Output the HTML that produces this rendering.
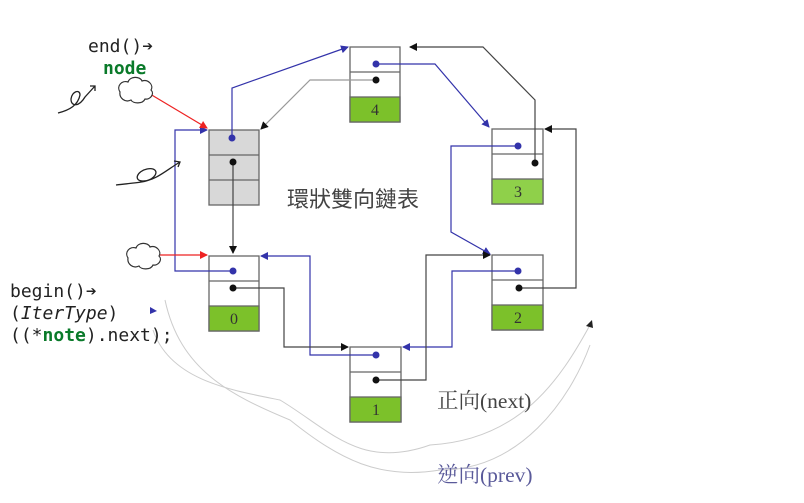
<!DOCTYPE html><html><head><meta charset="utf-8"><style>body{margin:0;background:#fff}svg{display:block}</style></head><body>
<svg width="804" height="503" viewBox="0 0 804 503" xmlns="http://www.w3.org/2000/svg">
<defs>
<marker id="ab" markerWidth="8" markerHeight="8" refX="7" refY="4" orient="auto" markerUnits="userSpaceOnUse"><path d="M0,0L8,4L0,8z" fill="#33a"/></marker>
<marker id="ak" markerWidth="8" markerHeight="8" refX="7" refY="4" orient="auto" markerUnits="userSpaceOnUse"><path d="M0,0L8,4L0,8z" fill="#111"/></marker>
<marker id="ar" markerWidth="8" markerHeight="8" refX="7" refY="4" orient="auto" markerUnits="userSpaceOnUse"><path d="M0,0L8,4L0,8z" fill="#e22"/></marker>
</defs>
<g fill="none" stroke="#ccc" stroke-width="1">
<path d="M153,330 C170,380 230,390 280,400 C330,430 360,470 430,445 C520,440 560,380 590,325"/>
<path d="M165,300 C180,370 230,395 290,420 C340,460 380,480 440,470 C520,470 570,400 590,345"/>
</g>
<g stroke="#666" stroke-width="1.3">
<rect x="209" y="130" width="50" height="75" fill="#d8d8d8"/>
<line x1="209" y1="155" x2="259" y2="155"/><line x1="209" y1="180" x2="259" y2="180"/>
<g fill="#fff"><rect x="350" y="47" width="50" height="75"/><rect x="492" y="129" width="51" height="75"/><rect x="492" y="255" width="51" height="75"/><rect x="350" y="347" width="51" height="75"/><rect x="209" y="256" width="50" height="75"/></g>
<g fill="#7cc12a"><rect x="350" y="97" width="50" height="25"/><rect x="492" y="179" width="51" height="25" fill="#8fd04a"/><rect x="492" y="305" width="51" height="25"/><rect x="350" y="397" width="51" height="25"/><rect x="209" y="306" width="50" height="25"/></g>
<path d="M350,72h50M492,154h51M492,280h51M350,372h51M209,281h50"/>
</g>
<g fill="none" stroke="#33a" stroke-width="1.2">
<path d="M232,138V88L348,47" marker-end="url(#ab)"/>
<path d="M376,64H435L489,127" marker-end="url(#ab)"/>
<path d="M518,146H451V232L490,254" marker-end="url(#ab)"/>
<path d="M518,271H452V347H403" marker-end="url(#ab)"/>
<path d="M376,355H310V256H261" marker-end="url(#ab)"/>
<path d="M233,271H175V130H207" marker-end="url(#ab)"/>
</g>
<g fill="none" stroke="#444" stroke-width="1.2">
<path d="M233,288H284V347H348" marker-end="url(#ak)"/>
<path d="M376,380H426V255H490" marker-end="url(#ak)"/>
<path d="M519,288H576V129H545" marker-end="url(#ak)"/>
<path d="M535,163V100L483,47H410" marker-end="url(#ak)"/>
<path d="M376,80H310L261,129" marker-end="url(#ak)" stroke="#999"/>
<path d="M233,162V253" marker-end="url(#ak)"/>
</g>
<g fill="none" stroke="#e22" stroke-width="1.2">
<path d="M140,88L207,128" marker-end="url(#ar)"/>
<path d="M143,255H207" marker-end="url(#ar)"/>
</g>
<g fill="#33a"><circle cx="232" cy="138" r="3.5"/><circle cx="376" cy="64" r="3.5"/><circle cx="518" cy="146" r="3.5"/><circle cx="518" cy="271" r="3.5"/><circle cx="376" cy="355" r="3.5"/><circle cx="233" cy="271" r="3.5"/></g>
<g fill="#111"><circle cx="233" cy="162" r="3.5"/><circle cx="376" cy="80" r="3.5"/><circle cx="535" cy="163" r="3.5"/><circle cx="519" cy="288" r="3.5"/><circle cx="376" cy="380" r="3.5"/><circle cx="233" cy="288" r="3.5"/></g>
<g fill="#fff" stroke="#333" stroke-width="1.2">
<path d="M120,92c-4-6 2-12 8-10c2-6 12-6 14-1c6-2 12 4 9 9c4 4 -1 10-6 9c-2 5-12 5-14 1c-6 3-12-2-11-8z"/>
<path d="M128,258c-4-6 2-12 8-10c2-6 12-6 14-1c6-2 12 4 9 9c4 4 -1 10-6 9c-2 5-12 5-14 1c-6 3-12-2-11-8z"/>
</g>
<g fill="none" stroke="#222" stroke-width="1.3">
<path d="M58,113c12-3 20-8 22-18c0-6-8-4-9 4c0 8 8 8 14-2l10-11m-5,0l5,0l0,5"/>
<path d="M116,185c15-2 28-2 35-6c8-5 6-12-4-10c-10 2-14 12-4 12c12 0 25-12 37-19m-6-1l6,1l-2,5"/>
</g>
<g font-family="'Liberation Serif','Noto Serif CJK SC',serif" font-size="16" text-anchor="middle" fill="#333">
<text x="375" y="115">4</text><text x="518" y="197">3</text><text x="518" y="323">2</text><text x="376" y="415">1</text><text x="234" y="324">0</text>
</g>
<g font-family="'DejaVu Sans Mono','Liberation Mono',monospace" font-size="18" fill="#222">
<text x="88" y="52">end()<tspan font-weight="bold">➔</tspan></text>
<text x="103" y="74" fill="#0a7a2a" font-weight="bold">node</text>
<text x="10" y="297">begin()<tspan font-weight="bold">➔</tspan></text>
<text x="10" y="319">(<tspan font-style="italic">IterType</tspan>)</text>
<text x="10" y="341">((*<tspan fill="#0a7a2a" font-weight="bold">note</tspan>).next);</text>
</g>
<path d="M150,307l7,4l-7,3z" fill="#33a"/>
<path d="M592,320l-6,6l7,2z" fill="#222"/>
<g font-family="'Liberation Serif','Noto Serif CJK TC',serif">
<text x="287" y="207" font-size="22" fill="#444" font-family="'Liberation Sans','Noto Sans CJK TC',sans-serif">環狀雙向鏈表</text>
<text x="437" y="408" font-size="21.5" fill="#444">正向(next)</text>
<text x="437" y="482" font-size="21.5" fill="#5a5a9a">逆向(prev)</text>
</g>
</svg></body></html>
